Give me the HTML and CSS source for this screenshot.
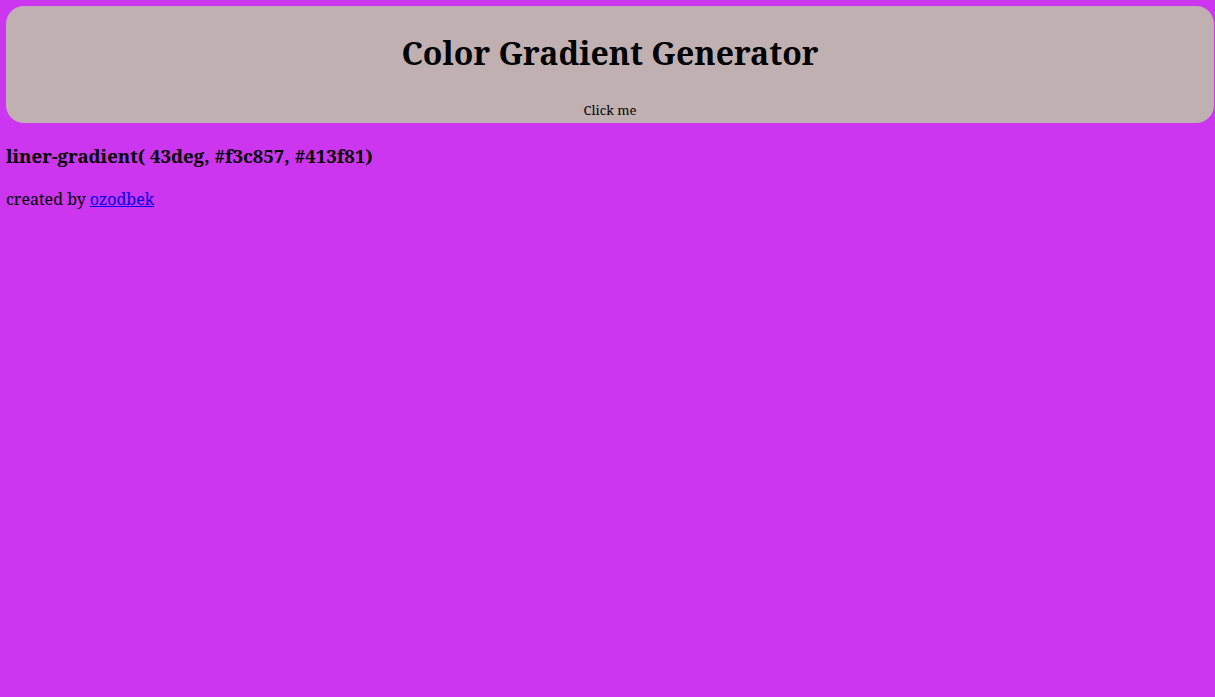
FILE: index.html
```html
<!DOCTYPE html>
<html lang="en">
<head>
  <meta charset="UTF-8">
  <meta name="viewport" content="width=device-width, initial-scale=1.0">
  <title>Color Gradient Generator</title>
  <link rel="stylesheet" href="styles.css">
</head>
<body>
  <div class="box">
    <h1 class="title">Color Gradient Generator</h1>
    <button class="btn" id="btn">Click me</button>
  </div>
  <h3 class="code" id="code">liner-gradient( 43deg, #f3c857, #413f81)</h3>
  <p class="credit">created by <a href="#">ozodbek</a></p>
</body>
</html>
```
FILE: styles.css
```css
body { margin: 0; padding: 6px; background-color: #cb36ee; font-family: "Noto Serif", "Liberation Serif", serif; }

/* top card */
.box {
  background-color: #c0b0b2;
  border-radius: 18px;
  text-align: center;
  padding: 4px 0 3px;
  margin-right: -5px;
}
.title { font-size: 32px; margin: 21px 0 24px; }
.btn {
  background: transparent;
  border: none;
  font-family: "Noto Serif", "Liberation Serif", serif;
  font-size: 13px;
  cursor: pointer;
}

.code { font-size: 18.6px; margin: 20px 0 20px; }
.credit { font-size: 16px; margin: 0; }
.credit a { color: #0000ee; }
```
